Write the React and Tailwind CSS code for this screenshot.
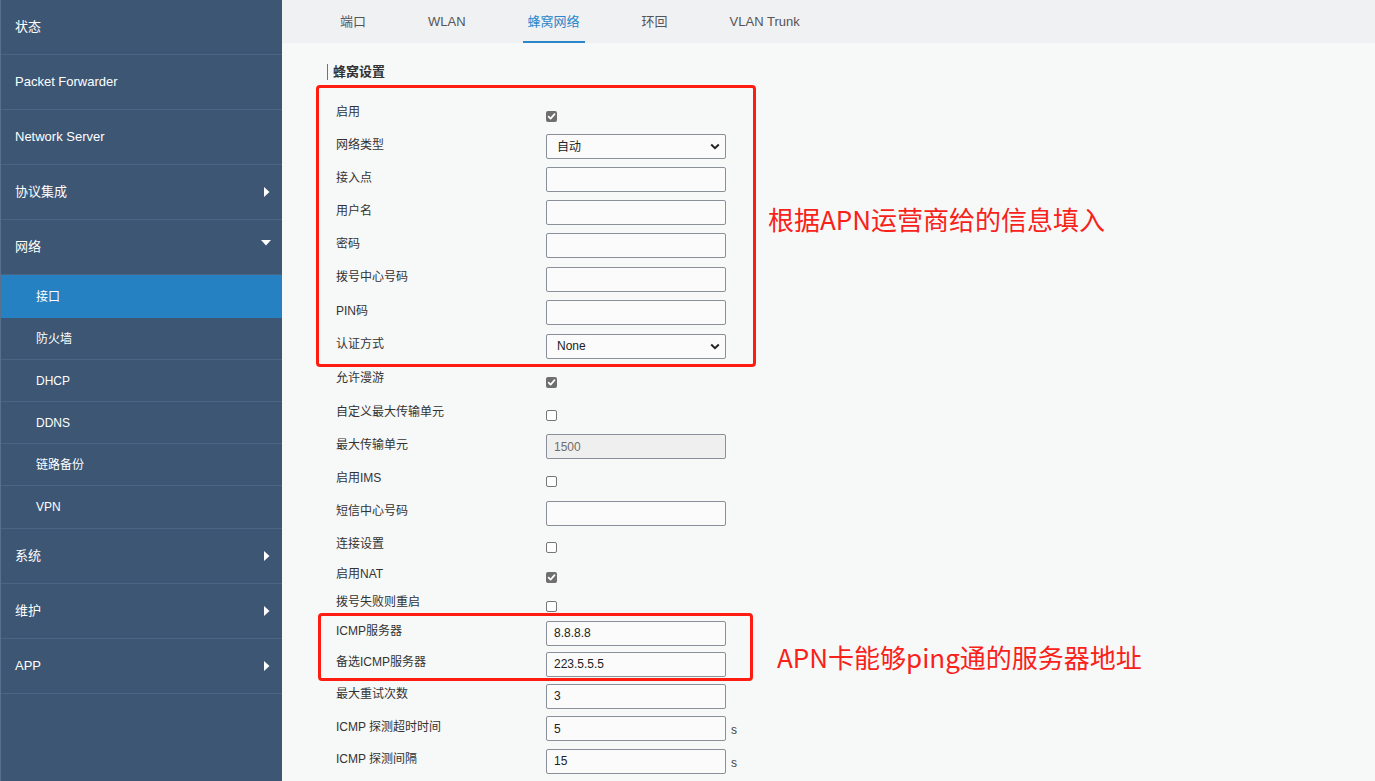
import React from 'react';

const FONT = '"Liberation Sans", Arial, "Noto Sans CJK SC", sans-serif';

const menu = [
  { label: '状态' },
  { label: 'Packet Forwarder' },
  { label: 'Network Server' },
  { label: '协议集成', arrow: 'right' },
  { label: '网络', arrow: 'down' },
  { label: '接口', sub: true, active: true },
  { label: '防火墙', sub: true },
  { label: 'DHCP', sub: true },
  { label: 'DDNS', sub: true },
  { label: '链路备份', sub: true },
  { label: 'VPN', sub: true, tall: true },
];
const menuBottom = [
  { label: '系统', arrow: 'right' },
  { label: '维护', arrow: 'right' },
  { label: 'APP', arrow: 'right' },
];

const tabs = ['端口', 'WLAN', '蜂窝网络', '环回', 'VLAN Trunk'];

// h = row height in px, type = control kind
const rows = [
  { label: '启用', type: 'check', checked: true, h: 'h-[32px]' },
  { label: '网络类型', type: 'select', value: '自动', h: 'h-[33px]' },
  { label: '接入点', type: 'input', h: 'h-[33px]' },
  { label: '用户名', type: 'input', h: 'h-[33px]' },
  { label: '密码', type: 'input', h: 'h-[33px]' },
  { label: '拨号中心号码', type: 'input', h: 'h-[34px]' },
  { label: 'PIN码', type: 'input', h: 'h-[33px]' },
  { label: '认证方式', type: 'select', value: 'None', h: 'h-[34px]' },
  { label: '允许漫游', type: 'check', checked: true, h: 'h-[34px]' },
  { label: '自定义最大传输单元', type: 'check', h: 'h-[33px]' },
  { label: '最大传输单元', type: 'input', value: '1500', disabled: true, h: 'h-[33px]' },
  { label: '启用IMS', type: 'check', h: 'h-[33px]' },
  { label: '短信中心号码', type: 'input', h: 'h-[34px]' },
  { label: '连接设置', type: 'check', h: 'h-[31px]' },
  { label: '启用NAT', type: 'check', checked: true, h: 'h-[29px]' },
  { label: '拨号失败则重启', type: 'check', h: 'h-[28px]' },
  { label: 'ICMP服务器', type: 'input', value: '8.8.8.8', h: 'h-[30px]' },
  { label: '备选ICMP服务器', type: 'input', value: '223.5.5.5', h: 'h-[32px]' },
  { label: '最大重试次数', type: 'input', value: '3', h: 'h-[32px]' },
  { label: 'ICMP 探测超时时间', type: 'input', value: '5', unit: 's', h: 'h-[33px]' },
  { label: 'ICMP 探测间隔', type: 'input', value: '15', unit: 's', h: 'h-[32px]' },
];

function Caret({ dir }) {
  if (dir === 'down') {
    return (
      <svg width="10" height="6" viewBox="0 0 10 6" className="-mt-[9px]">
        <path d="M0 0h10L5 5.5z" fill="#fff" />
      </svg>
    );
  }
  return (
    <svg width="6" height="10" viewBox="0 0 6 10" className="mr-[1px]">
      <path d="M0 0v10l5.5-5z" fill="#fff" />
    </svg>
  );
}

function TopItem({ item }) {
  return (
    <div className="h-[55px] flex items-center justify-between pl-[14px] pr-[11px] text-[13px] text-white border-b border-[#4b6584]">
      <span>{item.label}</span>
      {item.arrow && <Caret dir={item.arrow} />}
    </div>
  );
}

function Sidebar() {
  return (
    <div className="w-[282px] shrink-0 bg-[#3c5674] border-l border-[#56708e]">
      {menu.map((item) =>
        item.sub ? (
          <div
            key={item.label}
            className={`flex items-center pl-[35px] text-[12px] text-white ${
              item.active ? 'h-[43px] bg-[#2581c1]' : 'border-b border-[#4b6584]'
            } ${item.tall ? 'h-[43px]' : item.active ? '' : 'h-[42px]'}`}
          >
            {item.label}
          </div>
        ) : (
          <TopItem key={item.label} item={item} />
        )
      )}
      {menuBottom.map((item) => (
        <TopItem key={item.label} item={item} />
      ))}
    </div>
  );
}

function CheckBox({ checked }) {
  if (checked) {
    return (
      <span className="w-[11px] h-[11px] rounded-[2px] bg-[#6f6f6f] flex items-center justify-center">
        <svg width="9" height="9" viewBox="0 0 10 10">
          <path d="M1.8 5.2l2.2 2.2 4.4-5" fill="none" stroke="#fff" strokeWidth="1.9" strokeLinecap="round" strokeLinejoin="round" />
        </svg>
      </span>
    );
  }
  return <span className="block w-[11px] h-[11px] rounded-[2px] bg-white border border-[#767676]" />;
}

function Control({ row }) {
  if (row.type === 'check') {
    return (
      <div className="mt-[4px]">
        <CheckBox checked={row.checked} />
      </div>
    );
  }
  if (row.type === 'select') {
    return (
      <div className="w-[180px] h-[25px] border border-[#8a9099] rounded-[2px] bg-[#fbfbfb] flex items-center justify-between pl-[10px] pr-[5px] text-[12px] text-[#222]">
        <span>{row.value}</span>
        <svg width="10" height="7" viewBox="0 0 10 7">
          <path d="M1.2 1.5L5 5.2l3.8-3.7" fill="none" stroke="#222" strokeWidth="2" />
        </svg>
      </div>
    );
  }
  return (
    <div className="flex items-center">
      <div
        className={`w-[180px] h-[25px] border border-[#8a9099] rounded-[2px] flex items-center pl-[7px] text-[12px] ${
          row.disabled ? 'bg-[#efefef] text-[#6d6d6d]' : 'bg-[#fbfbfb] text-[#222]'
        }`}
      >
        {row.value}
      </div>
      {row.unit && <span className="ml-[5px] mt-[3px] text-[12px] text-[#444]">{row.unit}</span>}
    </div>
  );
}

export default function App() {
  return (
    <div className="flex h-[781px] overflow-hidden" style={{ fontFamily: FONT }}>
      <Sidebar />

      <div className="relative flex-1 bg-[#f7f8f8]">
        {/* Tabs */}
        <div className="h-[43px] bg-[#f0f1f3] flex items-stretch pl-[53px] gap-[52px]">
          {tabs.map((t) => (
            <div
              key={t}
              className={`flex items-center pt-[3px] px-[5px] text-[13px] ${
                t === '蜂窝网络'
                  ? 'text-[#2a87c9] border-b-2 border-[#2a87c9]'
                  : 'text-[#555] border-b-2 border-transparent'
              }`}
            >
              {t}
            </div>
          ))}
        </div>

        {/* Form */}
        <div className="pl-[45px]">
          <div className="mt-[21px] h-[16px] border-l border-[#2a87c9] pl-[5px] flex items-center text-[13px] font-semibold text-[#333]">
            蜂窝设置
          </div>
          <div className="mt-[18px] pl-[9px]">
            {rows.map((row) => (
              <div key={row.label} className={`${row.h} flex items-center`}>
                <div className="w-[210px] mb-[4px] text-[12px] text-[#333]">{row.label}</div>
                <Control row={row} />
              </div>
            ))}
          </div>
        </div>

        {/* Annotations */}
        <div className="absolute left-[34px] top-[85px] w-[440px] h-[282px] border-[3px] border-[#ff1d12] rounded-[4px]" />
        <div className="absolute left-[36px] top-[613px] w-[435px] h-[68px] border-[3px] border-[#ff1d12] rounded-[4px]" />
        <div
          className="absolute left-[486px] top-[204px] text-[26px] leading-[30px] text-[#f8221a] whitespace-nowrap"
          style={{ fontFamily: '"Noto Sans CJK SC", sans-serif' }}
        >
          根据APN运营商给的信息填入
        </div>
        <div
          className="absolute left-[495px] top-[642px] text-[26px] leading-[30px] text-[#f8221a] whitespace-nowrap"
          style={{ fontFamily: '"Noto Sans CJK SC", sans-serif' }}
        >
          APN卡能够ping通的服务器地址
        </div>
      </div>
    </div>
  );
}
